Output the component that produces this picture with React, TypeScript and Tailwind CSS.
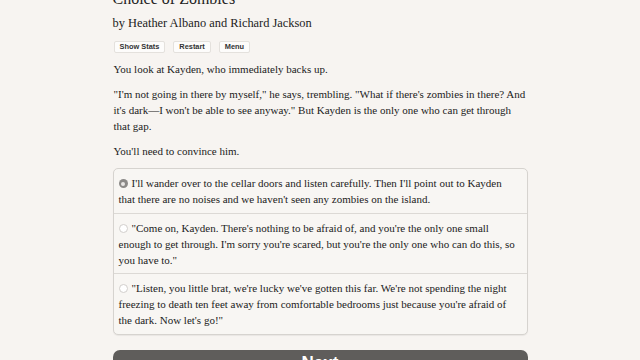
import React, { useState } from 'react';

const choices = [
    "I'll wander over to the cellar doors and listen carefully. Then I'll point out to Kayden that there are no noises and we haven't seen any zombies on the island.",
    '"Come on, Kayden. There\'s nothing to be afraid of, and you\'re the only one small enough to get through. I\'m sorry you\'re scared, but you\'re the only one who can do this, so you have to."',
    '"Listen, you little brat, we\'re lucky we\'ve gotten this far. We\'re not spending the night freezing to death ten feet away from comfortable bedrooms just because you\'re afraid of the dark. Now let\'s go!"',
];

const Radio: React.FC<{ checked: boolean }> = ({ checked }) =>
    checked ? (
        <span className="inline-block align-[-1px] w-[9px] h-[9px] rounded-full bg-[#8c8a88] mr-[4px] relative">
            <span className="absolute left-[2.5px] top-[2.5px] w-[4px] h-[4px] rounded-full bg-[#e9e7e5]" />
        </span>
    ) : (
        <span className="inline-block align-[-1px] w-[9px] h-[9px] rounded-full bg-white border border-[#d2cfcc] mr-[4px]" />
    );

const App: React.FC = () => {
    const [selected, setSelected] = useState(0);

    return (
        <div className="w-full h-[360px] overflow-hidden bg-[#f7f4f1] text-[#222] font-['Liberation_Serif',serif]">
            <div className="w-[415px] mx-auto">
                <div className="-mt-[11px] text-[16px] leading-[20px]">Choice of Zombies</div>
                <div className="mt-[6px] text-[12.4px] leading-[16px]">by Heather Albano and Richard Jackson</div>

                <div className="mt-[10px] flex gap-[8px] pl-[1px] font-['Liberation_Sans',sans-serif] text-[7.4px] font-semibold text-[#333]">
                    <button className="h-[12px] px-[5px] bg-[#fdfcfb] border border-[#e4e1dd] rounded-[2px] leading-[10px]">Show Stats</button>
                    <button className="h-[12px] px-[5px] bg-[#fdfcfb] border border-[#e4e1dd] rounded-[2px] leading-[10px]">Restart</button>
                    <button className="h-[12px] px-[5px] bg-[#fdfcfb] border border-[#e4e1dd] rounded-[2px] leading-[10px]">Menu</button>
                </div>

                <div className="text-[11px] leading-[16px]">
                    <p className="mt-[8px] pl-[1px]">You look at Kayden, who immediately backs up.</p>
                    <p className="mt-[9px] pl-[1px]">
                        "I'm not going in there by myself," he says, trembling. "What if there's zombies in there? And it's dark—I won't be able to see anyway." But Kayden is the only one who can get through that gap.
                    </p>
                    <p className="mt-[9px] pl-[1px]">You'll need to convince him.</p>

                    <div className="mt-[9px] border border-[#d6d3cf] rounded-[5px] bg-[#f8f6f3] shadow-[0_1px_1px_rgba(0,0,0,0.06)]">
                        {choices.map((c, i) => (
                            <div
                                key={i}
                                onClick={() => setSelected(i)}
                                className={`pl-[5px] pr-[6px] pt-[6px] pb-[5.5px] cursor-pointer ${i > 0 ? 'border-t border-[#dcd9d5]' : ''}`}
                            >
                                <Radio checked={selected === i} />
                                {c}
                            </div>
                        ))}
                    </div>
                </div>

                <button className="mt-[15px] w-full h-[40px] rounded-[7px] bg-[#5f5d5b] text-white font-['Liberation_Sans',sans-serif] font-bold text-[17px] leading-[20px] flex justify-center items-start">
                    <span className="mt-[3px]">Next</span>
                </button>
            </div>
        </div>
    );
};

export default App;
